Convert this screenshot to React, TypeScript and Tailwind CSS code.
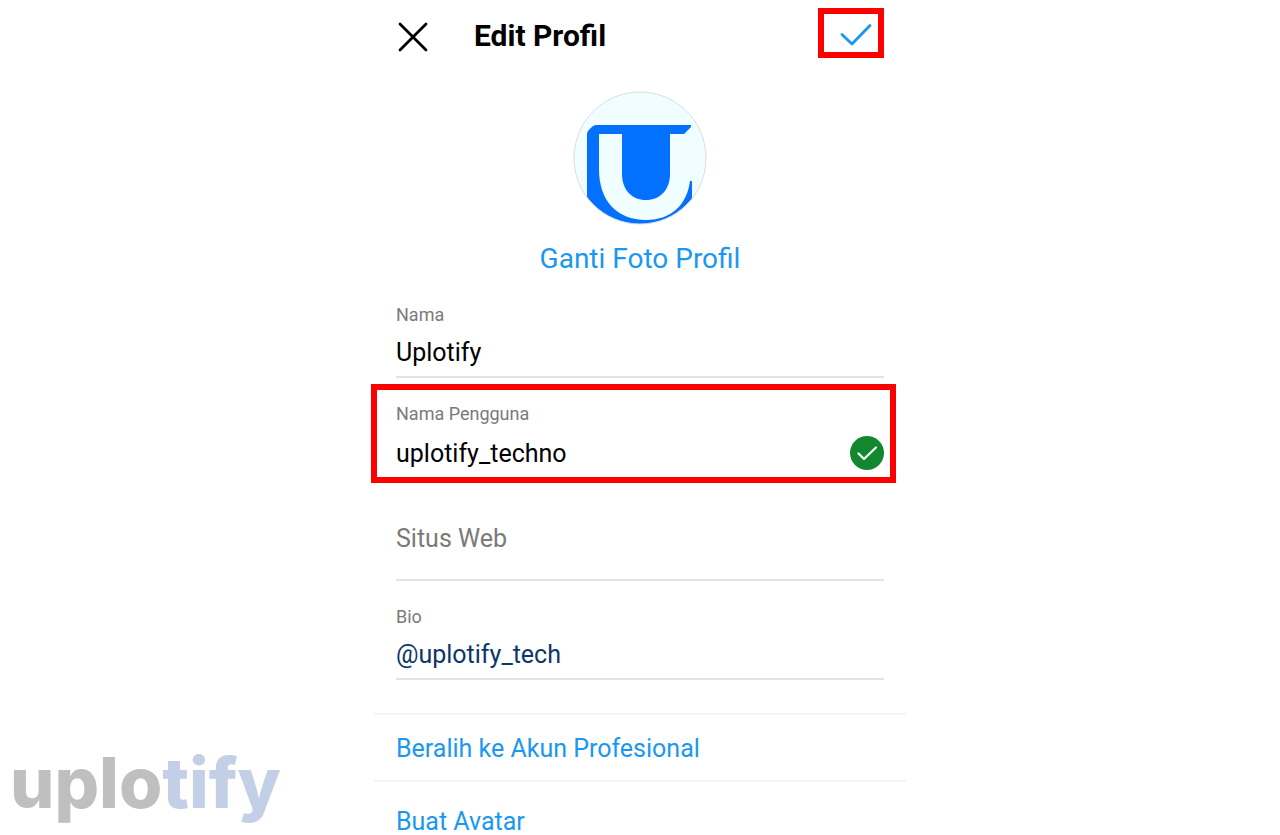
import React from 'react';

interface FieldProps {
  id: string;
  label: string;
  value: string;
  gapClass?: string;
  valueClass?: string;
}

// Label kecil di atas, isi di bawahnya
const Field: React.FC<FieldProps> = ({ id, label, value, gapClass = 'gap-3', valueClass = 'text-black' }) => (
  <div className={`flex min-w-0 flex-1 flex-col ${gapClass}`}>
    <label htmlFor={id} className="text-[18px] leading-5 text-[#7a7a7a]">{label}</label>
    <input
      id={id}
      type="text"
      defaultValue={value}
      className={`h-8 w-full bg-transparent p-0 text-[25px] leading-8 outline-none ${valueClass}`}
    />
  </div>
);

const CloseIcon = () => (
  <svg width="30" height="30" viewBox="0 0 30 30" fill="none" stroke="#000" strokeWidth="2.8" strokeLinecap="round">
    <path d="M2 2 L28 28 M28 2 L2 28" />
  </svg>
);

const CheckIcon = () => (
  <svg width="34" height="26" viewBox="0 0 34 26" fill="none" stroke="#1a98f0" strokeWidth="2.8" strokeLinecap="round" strokeLinejoin="round">
    <path d="M4 14.500 L14 24 L32 5.500" />
  </svg>
);

const ValidIcon = () => (
  <svg width="34" height="34" viewBox="0 0 34 34" fill="none" className="shrink-0">
    <circle cx="17" cy="17" r="17" fill="#11882d" />
    <path d="M8.500 17.500 L14 23 L26 11.500" stroke="#fff" strokeWidth="2.200" strokeLinecap="round" strokeLinejoin="round" />
  </svg>
);

const Avatar = () => (
  <svg width="134" height="134" viewBox="0 0 134 134" role="img" aria-label="Foto profil">
    <defs>
      <clipPath id="avatar">
        <circle cx="67" cy="67" r="66" />
      </clipPath>
    </defs>
    <circle cx="67" cy="67" r="66" fill="#f1feff" />
    <g clipPath="url(#avatar)">
      <path
        fill="#0470ff"
        d="M23 34 H118 V36 L111 43 H97 V83 C97 99 87 109 73 109 C59 109 49 99 49 83 V43 H26 V78 C26 110 44 129 73 129 C99 129 114 113 117 90 L119 90 V134 H14 V43 C14 40 20 34 23 34 Z"
      />
    </g>
    <circle cx="67" cy="67" r="66" fill="none" stroke="#d9dfe0" strokeWidth="1" />
  </svg>
);

const links = ['Beralih ke Akun Profesional', 'Buat Avatar'];

export default function App() {
  return (
    <div className="relative min-h-screen bg-white font-['Roboto',sans-serif]">
      <main className="mx-auto w-full max-w-[532px]">
        <header className="flex items-center px-[22px] pt-2">
          <button type="button" aria-label="Tutup" className="mt-2 ml-[2px]">
            <CloseIcon />
          </button>
          <h1 className="mt-1.5 ml-[46px] flex-1 text-[30px] leading-9 font-bold text-black">Edit Profil</h1>
          <button
            type="button"
            aria-label="Simpan"
            className="flex h-[50px] w-[66px] items-center justify-end border-6 border-[#ff0000] pr-1.5"
          >
            <CheckIcon />
          </button>
        </header>

        <section className="flex flex-col items-center gap-[18px] pt-[33px]">
          <Avatar />
          <button type="button" className="text-[28px] leading-8 text-[#1a98f0]">Ganti Foto Profil</button>
        </section>

        <form className="px-[22px] pt-[30px]">
          <div className="flex border-b-2 border-[#e3e3e3] pb-[7px]">
            <Field id="nama" label="Nama" value="Uplotify" />
          </div>

          {/* Kotak merah penanda */}
          <div className="mt-1.5 -mr-3 -ml-[25px] flex items-end border-6 border-[#ff0000] pt-3.5 pr-1.5 pb-[7px] pl-[19px]">
            <Field id="username" label="Nama Pengguna" value="uplotify_techno" gapClass="gap-3.5" />
            <ValidIcon />
          </div>

          <div className="border-b-2 border-[#e3e3e3] pt-10 pb-6">
            <input
              type="text"
              aria-label="Situs Web"
              placeholder="Situs Web"
              className="block h-8 w-full bg-transparent p-0 text-[25px] leading-8 outline-none placeholder:text-[#7a7a7a]"
            />
          </div>

          <div className="flex border-b-2 border-[#e3e3e3] pt-[26px] pb-[7px]">
            <Field id="bio" label="Bio" value="@uplotify_tech" valueClass="text-[#0c3767]" />
          </div>
        </form>

        <nav className="mt-[33px]">
          {links.map((text) => (
            <a key={text} href="#" className="block border-t-2 border-[#f4f4f4] px-[22px] pt-5 pb-[17px] text-[25px] leading-7 text-[#1a98f0] last:pt-[26px] last:pb-0">
              {text}
            </a>
          ))}
        </nav>
      </main>

      {/* Tanda air */}
      <div className="fixed bottom-3 left-2.5 font-['Inter',sans-serif] text-[70px] leading-[80px] font-extrabold text-[#bfbfbf]">
        uplo<span className="text-[#c3cfe7]">tify</span>
      </div>
    </div>
  );
}
